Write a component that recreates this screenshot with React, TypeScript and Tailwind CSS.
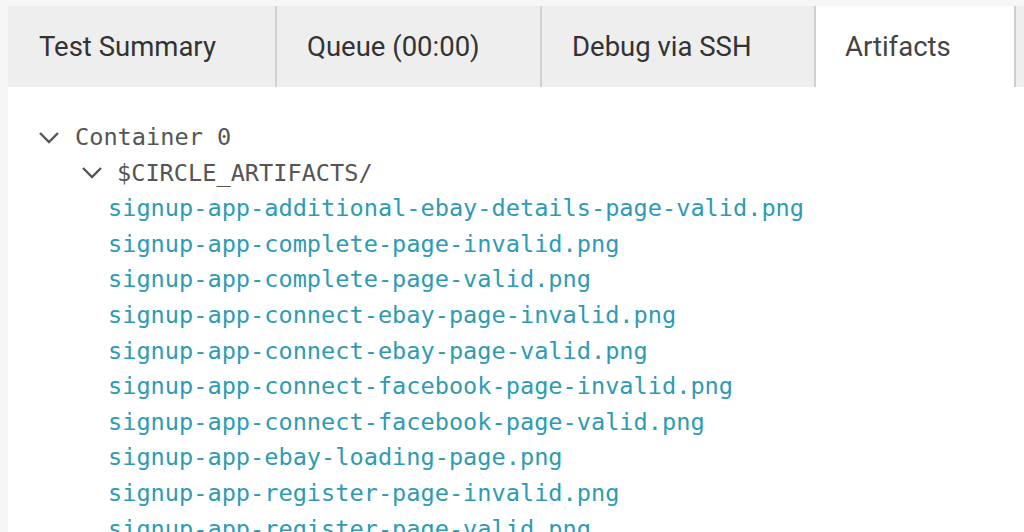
import React from "react";

const files = [
  "signup-app-additional-ebay-details-page-valid.png",
  "signup-app-complete-page-invalid.png",
  "signup-app-complete-page-valid.png",
  "signup-app-connect-ebay-page-invalid.png",
  "signup-app-connect-ebay-page-valid.png",
  "signup-app-connect-facebook-page-invalid.png",
  "signup-app-connect-facebook-page-valid.png",
  "signup-app-ebay-loading-page.png",
  "signup-app-register-page-invalid.png",
  "signup-app-register-page-valid.png",
];

function Chevron() {
  return (
    <svg width="22" height="14" viewBox="0 0 22 14" className="shrink-0">
      <path d="M2 2 L11 11 L20 2" fill="none" stroke="#555" strokeWidth="2.4" />
    </svg>
  );
}

export default function App() {
  const mono = { fontFamily: '"DejaVu Sans Mono", "Liberation Mono", monospace' };
  return (
    <div className="w-[1024px] h-[532px] overflow-hidden bg-[#f6f6f6] pt-[6px] pl-[8px] flex flex-col" style={{ fontFamily: "Roboto, sans-serif" }}>
      <div className="flex h-[81px] shrink-0 bg-[#eeeeee] text-[27.5px] text-[#333]">
        <div className="w-[269px] border-r-2 border-[#d0d0d0] flex items-center pl-[31px]">Test Summary</div>
        <div className="w-[265px] border-r-2 border-[#d0d0d0] flex items-center pl-[30px]">Queue (00:00)</div>
        <div className="w-[274px] border-r-2 border-[#d0d0d0] flex items-center pl-[30px]">Debug via SSH</div>
        <div className="w-[200px] border-r-2 border-[#cccccc] bg-white flex items-center pl-[29px] text-[#444]">Artifacts</div>
        <div className="flex-1" />
      </div>
      <div className="flex-1 bg-white pt-[33px] text-[23.6px] leading-[35.6px]" style={mono}>
        <div className="flex items-center pl-[30px] text-[#555]">
          <Chevron />
          <span className="ml-[15px]">Container 0</span>
        </div>
        <div className="flex items-center pl-[73px] text-[#555]">
          <Chevron />
          <span className="ml-[14px]">$CIRCLE_ARTIFACTS/</span>
        </div>
        <div className="pl-[100px] flex flex-col">
          {files.map((f) => (
            <div key={f} className="text-[#2e9bb4] whitespace-nowrap">{f}</div>
          ))}
        </div>
      </div>
    </div>
  );
}
